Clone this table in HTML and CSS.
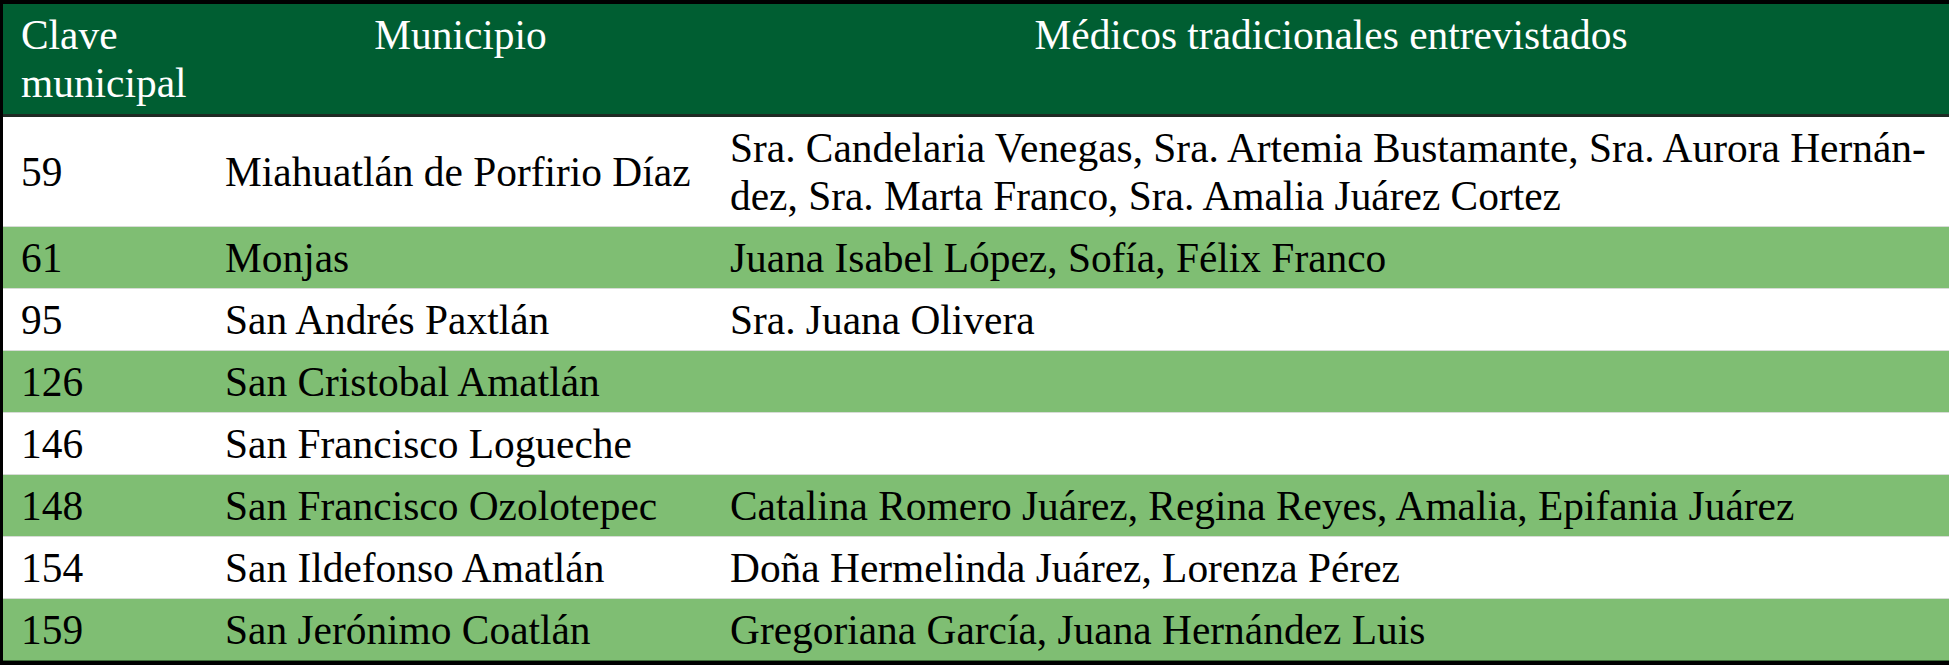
FILE: index.html
```html
<!DOCTYPE html>
<html lang="es">
<head>
<meta charset="utf-8">
<title>Médicos tradicionales entrevistados</title>
<link rel="stylesheet" href="styles.css">
</head>
<body>
<table class="data">
  <colgroup>
    <col class="c-key">
    <col class="c-mun">
    <col class="c-med">
  </colgroup>
  <thead>
    <tr>
      <th class="h-key">Clave municipal</th>
      <th class="h-center">Municipio</th>
      <th class="h-center">Médicos tradicionales entrevistados</th>
    </tr>
  </thead>
  <tbody>
    <tr class="odd">
      <td>59</td>
      <td>Miahuatlán de Porfirio Díaz</td>
      <td>Sra. Candelaria Venegas, Sra. Artemia Bustamante, Sra. Aurora Hernán-<br>dez, Sra. Marta Franco, Sra. Amalia Juárez Cortez</td>
    </tr>
    <tr class="even">
      <td>61</td>
      <td>Monjas</td>
      <td>Juana Isabel López, Sofía, Félix Franco</td>
    </tr>
    <tr class="odd">
      <td>95</td>
      <td>San Andrés Paxtlán</td>
      <td>Sra. Juana Olivera</td>
    </tr>
    <tr class="even">
      <td>126</td>
      <td>San Cristobal Amatlán</td>
      <td></td>
    </tr>
    <tr class="odd">
      <td>146</td>
      <td>San Francisco Logueche</td>
      <td></td>
    </tr>
    <tr class="even">
      <td>148</td>
      <td>San Francisco Ozolotepec</td>
      <td>Catalina Romero Juárez, Regina Reyes, Amalia, Epifania Juárez</td>
    </tr>
    <tr class="odd">
      <td>154</td>
      <td>San Ildefonso Amatlán</td>
      <td>Doña Hermelinda Juárez, Lorenza Pérez</td>
    </tr>
    <tr class="even last">
      <td>159</td>
      <td>San Jerónimo Coatlán</td>
      <td>Gregoriana García, Juana Hernández Luis</td>
    </tr>
  </tbody>
</table>
</body>
</html>
```
FILE: styles.css
```css
html, body {
  margin: 0;
  padding: 0;
  background: #ffffff;
  overflow: hidden;
}

.data {
  width: 1953px;
  table-layout: fixed;
  border-collapse: separate;
  border-spacing: 0;
  border-top: 4px solid #000000;
  border-left: 3px solid #000000;
  border-right: 4px solid #000000;
  border-bottom: 4px solid #000000;
  font-family: "Liberation Serif", "Times New Roman", serif;
  font-size: 41.4px;
  line-height: 48px;
  color: #000000;
}

.c-key { width: 205px; }
.c-mun { width: 505px; }
.c-med { width: auto; }

th {
  background: #005e32;
  color: #ffffff;
  font-weight: normal;
  vertical-align: top;
  padding: 7px 17px 7px 17px;
  height: 96px;
  box-sizing: content-box;
  border-bottom: 3px solid #1f2a24;
}

.h-key {
  text-align: left;
  padding-left: 18px;
  padding-right: 2px;
}

.h-center {
  text-align: center;
}

td {
  padding: 7px 17px 6px 17px;
  vertical-align: middle;
  text-align: left;
  border-bottom: 1px solid #d7dcd6;
  white-space: nowrap;
}

td:first-child {
  padding-left: 18px;
}

.odd td {
  background: #ffffff;
}

.even td {
  background: #7fbe73;
}

.last td {
  border-bottom: 1px solid #3f6e3a;
}
```
